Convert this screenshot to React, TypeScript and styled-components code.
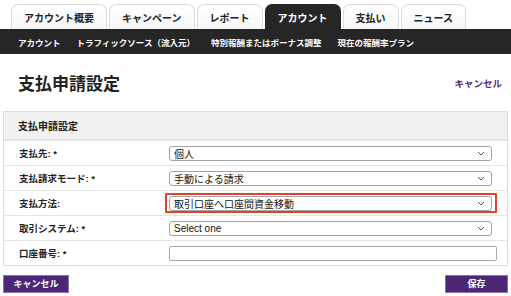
import React from 'react';
import styled, { createGlobalStyle } from 'styled-components';

const GlobalStyle = createGlobalStyle`
  body {
    margin: 0;
    background: #fff;
    font-family: "Liberation Sans", "Noto Sans CJK JP", sans-serif;
    color: #222;
  }
`;

const Page = styled.div`
  width: 511px;
  height: 296px;
  overflow: hidden;
  background: #fff;
`;

const TabBar = styled.div`
  display: flex;
  gap: 2px;
  padding: 4px 0 0 11px;
  height: 25px;
`;

const Tab = styled.div<{ $active?: boolean }>`
  display: flex;
  align-items: center;
  justify-content: center;
  padding: 0 12px;
  border: 1px solid ${({ $active }) => ($active ? '#262626' : '#dcdcdc')};
  border-bottom: none;
  border-radius: 7px 7px 0 0;
  background: ${({ $active }) => ($active ? '#262626' : 'linear-gradient(#ffffff, #f7f7f7)')};
  color: ${({ $active }) => ($active ? '#fff' : '#222')};
  font-size: 10px;
  font-weight: bold;
`;

const SubNav = styled.div`
  display: flex;
  align-items: center;
  gap: 16px;
  height: 25px;
  padding-left: 18px;
  background: #262626;
  color: #fff;
  font-size: 8.5px;
  font-weight: bold;
`;

const TitleRow = styled.div`
  display: flex;
  align-items: center;
  justify-content: space-between;
  height: 57px;
  padding: 0 9px 0 18px;
`;

const Title = styled.h1`
  margin: 0;
  font-size: 17px;
  font-weight: bold;
  color: #222;
`;

const TextLink = styled.a`
  color: #5a2d7e;
  font-size: 9.5px;
  font-weight: bold;
  text-decoration: none;
`;

const Panel = styled.div`
  margin: 0 3px;
  border: 1px solid #dedede;
`;

const PanelHeader = styled.div`
  display: flex;
  align-items: center;
  height: 27px;
  padding-left: 14px;
  background: #f1f1f1;
  border-bottom: 1px solid #e2e2e2;
  font-size: 10px;
  font-weight: bold;
`;

const Row = styled.div`
  display: grid;
  grid-template-columns: 150px 1fr;
  align-items: center;
  height: 24px;
  padding: 0 10px 0 15px;
  border-top: 1px solid #e6e6e6;

  &:first-of-type {
    border-top: none;
  }
`;

const Label = styled.div`
  font-size: 9.5px;
  font-weight: bold;
  color: #222;
`;

const Field = styled.div<{ $error?: boolean }>`
  display: flex;
  margin-left: ${({ $error }) => ($error ? '-4px' : '0')};
  margin-right: ${({ $error }) => ($error ? '0' : '5px')};
  padding: ${({ $error }) => ($error ? '1px 3px 0 2px' : '0')};
  border: ${({ $error }) => ($error ? '2px solid #e0432b' : 'none')};
  border-radius: 1px;
`;

const SelectBox = styled.div`
  flex: 1;
  display: flex;
  align-items: center;
  justify-content: space-between;
  height: 13px;
  padding: 0 6px 0 4px;
  border: 1px solid #a4a4a4;
  border-radius: 3px;
  background: #fff;
  font-size: 10px;
  color: #111;
`;

const TextInput = styled.div`
  flex: 1;
  height: 13px;
  margin-right: -5px;
  border: 1px solid #a8a8a8;
  border-radius: 2px;
  background: #fff;
`;

const Chevron = () => (
  <svg width="8" height="5" viewBox="0 0 8 5">
    <path d="M1 1 L4 4 L7 1" fill="none" stroke="#555" strokeWidth="1" />
  </svg>
);

const Actions = styled.div`
  display: flex;
  justify-content: space-between;
  margin: 9px 3px 0;
`;

const Button = styled.button<{ $width: number }>`
  display: block;
  width: ${({ $width }) => $width}px;
  height: 18px;
  padding: 0;
  border: 1px solid #8a73a6;
  background: #4b2775;
  color: #fff;
  font-family: inherit;
  font-size: 9px;
  font-weight: bold;
  line-height: 16px;
`;

const tabs = ['アカウント概要', 'キャンペーン', 'レポート', 'アカウント', '支払い', 'ニュース'];
const subItems = ['アカウント', 'トラフィックソース（流入元）', '特別報酬またはボーナス調整', '現在の報酬率プラン'];

const fields = [
  { label: '支払先: *', value: '個人' },
  { label: '支払請求モード: *', value: '手動による請求' },
  { label: '支払方法:', value: '取引口座へ口座間資金移動', error: true },
  { label: '取引システム: *', value: 'Select one' },
];

export default function App() {
  return (
    <Page>
      <GlobalStyle />
      <TabBar>
        {tabs.map((t) => (
          <Tab key={t} $active={t === 'アカウント'}>
            {t}
          </Tab>
        ))}
      </TabBar>
      <SubNav>
        {subItems.map((s) => (
          <span key={s}>{s}</span>
        ))}
      </SubNav>
      <TitleRow>
        <Title>支払申請設定</Title>
        <TextLink href="#">キャンセル</TextLink>
      </TitleRow>
      <Panel>
        <PanelHeader>支払申請設定</PanelHeader>
        {fields.map((f) => (
          <Row key={f.label}>
            <Label>{f.label}</Label>
            <Field $error={f.error}>
              <SelectBox>
                <span>{f.value}</span>
                <Chevron />
              </SelectBox>
            </Field>
          </Row>
        ))}
        <Row>
          <Label>口座番号: *</Label>
          <Field>
            <TextInput />
          </Field>
        </Row>
      </Panel>
      <Actions>
        <Button $width={66}>キャンセル</Button>
        <Button $width={63}>保存</Button>
      </Actions>
    </Page>
  );
}
